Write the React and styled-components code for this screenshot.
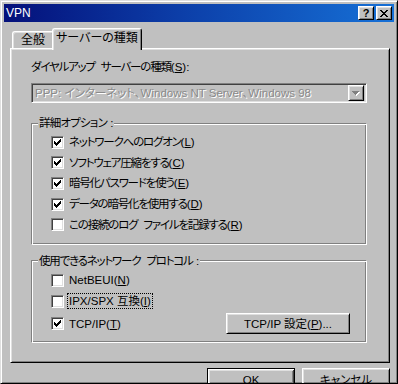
import styled, { createGlobalStyle, css } from "styled-components";

const GlobalStyle = createGlobalStyle`
  html, body {
    margin: 0;
    padding: 0;
    background: #c0c0c0;
  }
  body {
    font-family: "Liberation Sans", "Noto Sans CJK JP", sans-serif;
    font-size: 11.5px;
    color: #000;
    font-feature-settings: "palt";
  }
`;

const raised = css`
  border: 1px solid;
  border-color: #fff #000 #000 #fff;
  box-shadow: inset 1px 1px #dfdfdf, inset -1px -1px #808080;
`;

const sunken = css`
  border: 1px solid;
  border-color: #808080 #fff #fff #808080;
  box-shadow: inset 1px 1px #404040, inset -1px -1px #dfdfdf;
`;

const Window = styled.div`
  width: 398px;
  height: 384px;
  box-sizing: border-box;
  overflow: hidden;
  background: #c0c0c0;
  border: 1px solid;
  border-color: #dfdfdf #000 #000 #dfdfdf;
  box-shadow: inset 1px 1px #fff, inset -1px -1px #808080;
  padding: 3px 3px 0 3px;
`;

const TitleBar = styled.div`
  height: 18px;
  display: flex;
  align-items: center;
  justify-content: space-between;
  padding: 0 2px 0 2px;
  background: linear-gradient(90deg, #04107a 0%, #0c3ea8 45%, #1670d6 100%);
`;

const Title = styled.span`
  color: #fff;
  font-size: 12px;
  line-height: 18px;
`;

const TitleButtons = styled.div`
  display: flex;
  gap: 2px;
`;

const TitleButton = styled.div`
  width: 16px;
  height: 14px;
  box-sizing: border-box;
  ${raised};
  background: #c0c0c0;
  display: flex;
  align-items: center;
  justify-content: center;
  font-weight: bold;
  font-size: 11px;
  line-height: 12px;
`;

const Body = styled.div`
  padding: 0 4px 0 6px;
`;

const TabRow = styled.div`
  height: 20px;
  margin-top: 6px;
  padding-left: 2px;
  display: flex;
  align-items: flex-end;
  position: relative;
  z-index: 1;
`;

const Tab = styled.div`
  box-sizing: border-box;
  background: #c0c0c0;
  border-top: 1px solid #fff;
  border-left: 1px solid #fff;
  border-right: 1px solid #000;
  border-radius: 3px 3px 0 0;
  box-shadow: inset 1px 1px #dfdfdf, inset -1px 0 #808080;
  display: flex;
  justify-content: center;
  align-items: center;
  font-size: 12px;
  width: ${({ $w }) => $w}px;
  height: ${({ $active }) => ($active ? 22 : 17)}px;
  margin-bottom: ${({ $active }) => ($active ? -2 : 0)}px;
  margin-left: ${({ $active }) => ($active ? -2 : 0)}px;
  padding-bottom: ${({ $active }) => ($active ? 3 : 0)}px;
  position: relative;
  z-index: ${({ $active }) => ($active ? 2 : 0)};
  line-height: 14px;
`;

const Panel = styled.div`
  height: 315px;
  box-sizing: border-box;
  ${raised};
  box-shadow: inset 1px 1px #dfdfdf, inset -1px -1px #808080;
  padding: 11px 22px 0 20px;
`;

const Label = styled.div`
  height: 14px;
  line-height: 14px;
`;

const Jp = styled.span`
  letter-spacing: ${({ $ls = -1.2 }) => $ls}px;
  word-spacing: 4px;
`;

const Combo = styled.div`
  margin-top: 9px;
  height: 20px;
  box-sizing: border-box;
  ${sunken};
  display: flex;
  align-items: center;
  justify-content: space-between;
  padding: 0 2px 0 3px;
`;

const DisabledText = styled.span`
  color: #8a8a8a;
  text-shadow: 1px 1px #fff;
  line-height: 14px;
  white-space: nowrap;
`;

const DropButton = styled.div`
  width: 16px;
  height: 16px;
  box-sizing: border-box;
  ${raised};
  display: flex;
  align-items: center;
  justify-content: center;
`;

const Group = styled.fieldset`
  margin: ${({ $top }) => $top}px 0 0 0;
  padding: 0;
  min-width: 0;
  border: 1px solid;
  border-color: #808080 #fff #fff #808080;
  box-shadow: inset 1px 1px #fff, inset -1px -1px #808080;
`;

const Legend = styled.legend`
  margin-left: 6px;
  padding: 0 1px;
  background: #c0c0c0;
  line-height: 14px;
  height: 14px;
`;

const Rows = styled.div`
  padding: ${({ $pad }) => $pad};
  display: flex;
  flex-direction: column;
`;

const Row = styled.div`
  height: ${({ $h }) => $h}px;
  margin-top: ${({ $mt = 0 }) => $mt}px;
  display: flex;
  align-items: center;
`;

const Box = styled.span`
  width: 13px;
  height: 13px;
  box-sizing: border-box;
  ${sunken};
  background: #fff;
  display: flex;
  align-items: center;
  justify-content: center;
  flex: none;
`;

const RowText = styled.span`
  margin-left: 4px;
  line-height: 14px;
  white-space: nowrap;
  padding: 0 1px;
  outline: ${({ $focus }) => ($focus ? "1px dotted #000" : "none")};
`;

const Key = styled.span`
  text-decoration: underline;
  text-underline-offset: 1px;
`;

const Button = styled.div`
  width: ${({ $w }) => $w}px;
  height: ${({ $h }) => $h}px;
  box-sizing: border-box;
  ${raised};
  display: flex;
  align-items: center;
  justify-content: center;
  line-height: 14px;
  margin-left: ${({ $auto }) => ($auto ? "auto" : "0")};
  ${({ $default }) =>
    $default &&
    css`
      border: 1px solid #000;
      box-shadow: inset 1px 1px #fff, inset -1px -1px #404040,
        inset 2px 2px #dfdfdf, inset -2px -2px #808080;
    `}
`;

const Footer = styled.div`
  margin-top: 5px;
  display: flex;
  justify-content: flex-end;
  gap: 7px;
`;

const Check = () => (
  <svg width="7" height="7" viewBox="0 0 7 7" shapeRendering="crispEdges">
    <path
      d="M0 2h1v3h-1z M1 3h1v3h-1z M2 4h1v3h-1z M3 3h1v3h-1z M4 2h1v3h-1z M5 1h1v3h-1z M6 0h1v3h-1z"
      fill="#000"
    />
  </svg>
);

const CheckBox = ({ checked }) => <Box>{checked && <Check />}</Box>;

const Option = ({ checked, children, h, mt, focus }) => (
  <Row $h={h} $mt={mt}>
    <CheckBox checked={checked} />
    <RowText $focus={focus}>{children}</RowText>
  </Row>
);

const options = [
  { checked: true, text: "ネットワークへのログオン", key: "L" },
  { checked: true, text: "ソフトウェア圧縮をする", key: "C" },
  { checked: true, text: "暗号化パスワードを使う", key: "E" },
  { checked: true, text: "データの暗号化を使用する", key: "D" },
  { checked: false, text: "この接続のログ ファイルを記録する", key: "R" },
];

export default function App() {
  return (
    <>
      <GlobalStyle />
      <Window>
        <TitleBar>
          <Title>VPN</Title>
          <TitleButtons>
            <TitleButton>?</TitleButton>
            <TitleButton>
              <svg width="8" height="7" viewBox="0 0 8 7" shapeRendering="crispEdges">
                <path
                  d="M0 0h2v1h-2z M6 0h2v1h-2z M1 1h2v1h-2z M5 1h2v1h-2z M2 2h4v1h-4z M3 3h2v1h-2z M2 4h4v1h-4z M1 5h2v1h-2z M5 5h2v1h-2z M0 6h2v1h-2z M6 6h2v1h-2z"
                  fill="#000"
                />
              </svg>
            </TitleButton>
          </TitleButtons>
        </TitleBar>

        <Body>
          <TabRow>
            <Tab $w={42}>全般</Tab>
            <Tab $w={90} $active>
              サーバーの種類
            </Tab>
          </TabRow>

          <Panel>
            <Label>
              <Jp>ダイヤルアップ サーバーの種類</Jp>(<Key>S</Key>):
            </Label>
            <Combo>
              <DisabledText>PPP: インターネット、Windows NT Server、Windows 98</DisabledText>
              <DropButton>
                <svg width="8" height="5" viewBox="0 0 8 5" shapeRendering="crispEdges">
                  <path d="M1 1h7v1h-1v1h-1v1h-1v1h-1z" fill="#fff" />
                  <path d="M0 0h7v1h-1v1h-1v1h-1v1h-1v-1h-1v-1h-1v-1h-1z" fill="#808080" />
                </svg>
              </DropButton>
            </Combo>

            <Group $top={13}>
              <Legend>
                <Jp $ls={-0.8}>詳細オプション</Jp> :
              </Legend>
              <Rows $pad="2px 0 9px 19px">
                {options.map((o) => (
                  <Option key={o.key} checked={o.checked} h={20.6}>
                    <Jp>{o.text}</Jp>(<Key>{o.key}</Key>)
                  </Option>
                ))}
              </Rows>
            </Group>

            <Group $top={9}>
              <Legend>
                <Jp>使用できるネットワーク プロトコル</Jp> :
              </Legend>
              <Rows $pad="2px 16px 7px 19px">
                <Option h={21}>
                  NetBEUI(<Key>N</Key>)
                </Option>
                <Option h={21} focus>
                  IPX/SPX 互換(<Key>I</Key>)
                </Option>
                <Row $h={22} $mt={1}>
                  <CheckBox checked />
                  <RowText>
                    TCP/IP(<Key>T</Key>)
                  </RowText>
                  <Button $w={124} $h={21} $auto>
                    TCP/IP 設定(<Key>P</Key>)...
                  </Button>
                </Row>
              </Rows>
            </Group>
          </Panel>

          <Footer>
            <Button $w={88} $h={23} $default>
              OK
            </Button>
            <Button $w={88} $h={23}>
              キャンセル
            </Button>
          </Footer>
        </Body>
      </Window>
    </>
  );
}
